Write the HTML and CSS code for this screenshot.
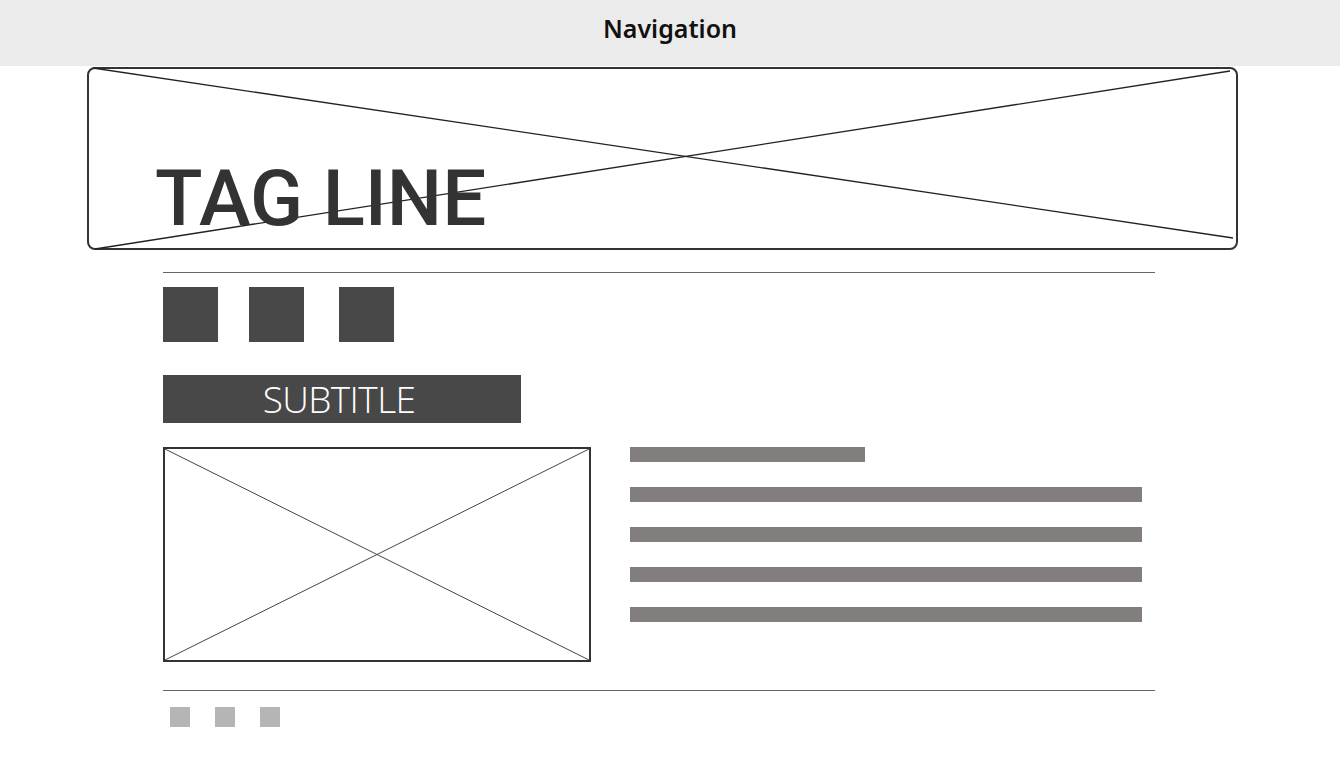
FILE: index.html
```html
<!DOCTYPE html>
<html>
<head>
<meta charset="utf-8">
<link rel="stylesheet" href="styles.css">
</head>
<body>
<header class="nav">Navigation</header>
<section class="hero">
  <svg class="hero-x" viewBox="0 0 1151 183" preserveAspectRatio="none">
    <line x1="6" y1="1" x2="1146" y2="171" />
    <line x1="8" y1="182" x2="1143" y2="4" />
  </svg>
  <h1 class="tagline">TAG LINE</h1>
</section>
<main class="content">
  <hr class="rule rule-top">
  <div class="squares">
    <span class="sq"></span>
    <span class="sq sq-2"></span>
    <span class="sq sq-3"></span>
  </div>
  <div class="subtitle">SUBTITLE</div>
  <div class="media">
    <div class="placeholder">
      <svg viewBox="0 0 424 211" preserveAspectRatio="none">
        <line x1="0" y1="0" x2="424" y2="211" />
        <line x1="0" y1="211" x2="424" y2="0" />
      </svg>
    </div>
    <div class="bars">
      <span class="bar bar-short"></span>
      <span class="bar"></span>
      <span class="bar"></span>
      <span class="bar"></span>
      <span class="bar"></span>
    </div>
  </div>
  <hr class="rule rule-bottom">
  <div class="dots">
    <span class="dot"></span>
    <span class="dot"></span>
    <span class="dot"></span>
  </div>
</main>
</body>
</html>
```
FILE: styles.css
```css
* { box-sizing: border-box; }
html, body { margin: 0; padding: 0; background: #fff; }
body { font-family: "Noto Sans", "Open Sans", sans-serif; color: #111; }

.nav {
  height: 66px;
  background: #ebebeb;
  text-align: center;
  font-family: "Noto Sans", sans-serif;
  font-weight: 600;
  font-size: 25px;
  line-height: 56px;
  color: #111;
}

.hero {
  position: relative;
  margin: 1px 0 0 87px;
  width: 1151px;
  height: 183px;
  border: 2px solid #333;
  border-radius: 8px;
  display: flex;
  align-items: flex-end;
  padding: 0 0 10px 66px;
}
.hero-x {
  position: absolute;
  left: -2px;
  top: -2px;
  width: 1151px;
  height: 183px;
}
.hero-x line { stroke: #222; stroke-width: 1.3; }
.tagline {
  position: relative;
  margin: 0;
  font-family: Roboto, "Liberation Sans", sans-serif;
  font-weight: 500;
  font-size: 78px;
  line-height: 1;
  color: #333;
}

.content {
  margin-left: 163px;
  width: 992px;
  display: flex;
  flex-direction: column;
}
.rule {
  margin: 0;
  border: 0;
  height: 1px;
  background: #666;
  width: 992px;
}
.rule-top { margin-top: 22px; }
.squares { display: flex; margin-top: 14px; }
.sq { width: 55px; height: 55px; background: #484848; }
.sq-2 { margin-left: 31px; }
.sq-3 { margin-left: 35px; }

.subtitle {
  margin-top: 33px;
  width: 358px;
  height: 48px;
  background: #484848;
  color: #fff;
  text-align: center;
  padding-right: 6px;
  font-family: "Open Sans", sans-serif;
  font-weight: 300;
  font-size: 37px;
  line-height: 48px;
  letter-spacing: -0.6px;
}

.media { display: flex; margin-top: 24px; gap: 39px; }
.placeholder {
  width: 428px;
  height: 215px;
  border: 2px solid #333;
}
.placeholder svg { display: block; width: 424px; height: 211px; }
.placeholder line { stroke: #444; stroke-width: 1; }

.bars { display: flex; flex-direction: column; gap: 25px; }
.bar { display: block; width: 512px; height: 15px; background: #827e7d; }
.bar-short { width: 235px; }

.rule-bottom { margin-top: 28px; }
.dots { display: flex; gap: 25px; margin-top: 16px; padding-left: 7px; }
.dot { width: 20px; height: 20px; background: #b5b5b5; }
```
